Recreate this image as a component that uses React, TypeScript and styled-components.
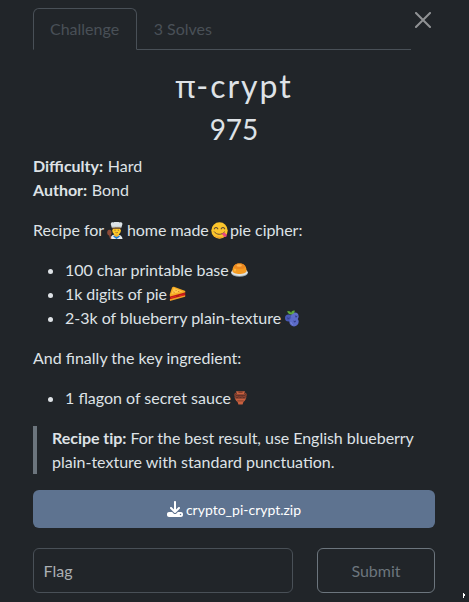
import React from "react";
import styled, { createGlobalStyle } from "styled-components";
import { FaDownload } from "react-icons/fa6";

const GlobalStyle = createGlobalStyle`
  *, *::before, *::after { box-sizing: border-box; }
  html, body { margin: 0; background: #212529; }
  body {
    font-family: Lato, "Liberation Sans", sans-serif;
    font-size: 16px;
    line-height: 24px;
    color: #dee2e6;
    overflow: hidden;
  }
`;

const Modal = styled.main`
  position: relative;
  width: 469px;
  height: 602px;
  padding: 8px 34px 0 33px;
  background: #212529;
  overflow: hidden;
`;

const Header = styled.header`
  display: flex;
  justify-content: space-between;
  align-items: flex-start;
  margin-right: -1px;
`;

const Tabs = styled.nav`
  display: flex;
  width: 378px;
  height: 42px;
  border-bottom: 1px solid #495057;
`;

const Tab = styled.button<{ $active?: boolean }>`
  height: 42px;
  padding: ${(p) => (p.$active ? "8px 17px 8px 16px" : "8px 15.5px")};
  border: 1px solid ${(p) => (p.$active ? "#495057" : "transparent")};
  border-bottom-color: ${(p) => (p.$active ? "#212529" : "transparent")};
  border-radius: 6px 6px 0 0;
  background: ${(p) => (p.$active ? "#212529" : "transparent")};
  color: #495057;
  font: inherit;
`;

const Close = styled.button`
  display: flex;
  margin: 4px 5px 0 0;
  padding: 0;
  border: 0;
  background: none;
  color: #909294;
`;

const Title = styled.h2`
  margin: 17px 0 0;
  font-size: 32px;
  font-weight: 400;
  line-height: 38px;
  letter-spacing: 2px;
  text-align: center;
`;

const Greek = styled.span`
  font-family: "Noto Sans", sans-serif;
  font-size: 31px;
  line-height: 1;
  letter-spacing: 0.8px;
`;

const Points = styled.h3`
  margin: 8px 0 0;
  font-size: 28px;
  font-weight: 400;
  line-height: 33px;
  text-align: center;
`;

const Text = styled.p`
  margin: 0 0 16px;
  white-space: nowrap;
`;

const Facts = styled(Text)`
  margin-top: 8px;
`;

const Strong = styled.strong`
  margin-right: 0.5px;
`;

const List = styled.ul`
  margin: 0 0 16px;
  padding-left: 32px;
`;

const Tip = styled.blockquote`
  margin: 0 0 16px;
  padding-left: 15px;
  border-left: 4px solid #6c757d;
`;

const TipLead = styled.span`
  letter-spacing: -0.04px;
`;

const Emoji = styled.svg<{ $before?: number; $after?: number }>`
  width: 17px;
  height: 17px;
  vertical-align: -3px;
  margin-left: ${(p) => p.$before ?? -1.5}px;
  margin-right: ${(p) => p.$after ?? 0}px;
`;

const Snug = styled.span`
  letter-spacing: -0.05px;
`;

const Download = styled.button`
  display: flex;
  align-items: center;
  justify-content: center;
  gap: 3px;
  width: 402px;
  height: 38px;
  border: 0;
  border-radius: 6px;
  background: #5e7390;
  color: #fff;
  font: 14px/21px Lato, sans-serif;
`;

const Form = styled.form`
  display: grid;
  grid-template-columns: 260px 118px;
  gap: 24px;
  margin-top: 20px;
`;

const Field = styled.input`
  width: 100%;
  height: 45px;
  padding: 0 9.5px;
  border: 1px solid #495057;
  border-radius: 6px;
  background: #212529;
  color: #dee2e6;
  font: inherit;
  &::placeholder { color: #abafb3; opacity: 1; }
`;

const Submit = styled.button`
  height: 45px;
  border: 1px solid #6c757d;
  border-radius: 6px;
  background: transparent;
  color: #6c757d;
  font: inherit;
`;

const CornerMark = styled.svg`
  position: absolute;
  left: 463px;
  top: 593px;
`;

const Cook = () => (
  <Emoji viewBox="0 0 17 17" $before={-1} $after={3}>
    <path d="M3.5 17c.2-3.3 2-4.6 5.7-4.6s6 1.2 6.3 4.6z" fill="#e6edf0" />
    <path d="M7 11h5v2.5l-2.5 2L7 13.5z" fill="#eaad2d" />
    <path d="M6.4 13.4 9.5 15l3.2-1.6v1.3L9.5 17l-3.1-2.3z" fill="#1976d2" />
    <circle cx="9.6" cy="8.4" r="4.3" fill="#ffca28" />
    <path d="M5.2 8.3V5.2h8.8v3.1l-1-1.6H6.3z" fill="#543930" />
    <path d="M4.8 5.7 3.8 2.3C3.7.6 5.2 0 6.3.5c1.3-1 5.1-1 6.4 0 1.3-.5 3 .3 2.7 1.8l-1.1 3.4c-2.3-.7-7.1-.7-9.5 0z" fill="#dce3e7" />
    <path d="M5.1 4.8c2.5-.6 6.5-.6 9 0" stroke="#b5c2c8" strokeWidth=".5" fill="none" />
    <path d="M7.5 8.2h1M10.8 8.2h1" stroke="#5b4637" strokeWidth=".8" />
    <path d="M8.4 10.4q1.3.8 2.5 0" stroke="#795548" strokeWidth=".7" fill="none" />
    <ellipse cx="2.4" cy="10.6" rx="2.2" ry="2.9" fill="#8d4b38" />
    <path d="m2.5 12 1.3 5" stroke="#8d4b38" strokeWidth="1.3" />
  </Emoji>
);

const Yummy = () => (
  <Emoji viewBox="0 0 17 17" $before={-2} $after={-2}>
    <circle cx="8.5" cy="8.5" r="8.2" fill="#fcc52b" />
    <path d="M2 12.8c3 4.3 9.5 4.7 13 .1-2 2-10 2.7-13-.1z" fill="#efa02b" />
    <path d="M3.3 6.8q1.7-2.5 3.5 0M10.2 6.8q1.8-2.5 3.5 0" stroke="#5b4637" strokeWidth="1.1" fill="none" strokeLinecap="round" />
    <path d="M3.3 9.8c2.4 3.3 7.3 3.5 10.2.2" stroke="#654936" strokeWidth="1" fill="none" strokeLinecap="round" />
    <path d="m10.6 11.8 3-1.4 1.8 2c1.2 1.7-.8 3.3-2.4 2z" fill="#e6487e" />
  </Emoji>
);

const Custard = () => (
  <Emoji viewBox="0 0 17 17">
    <ellipse cx="8.5" cy="10.9" rx="8.3" ry="3.9" fill="#9ba8ae" />
    <ellipse cx="8.5" cy="10.2" rx="8.2" ry="3.7" fill="#dce3e5" />
    <path d="M1.4 8.9C1.4 6.5 2.4 4 4 2.8c2-1.7 7-1.7 9 0 1.6 1.2 2.6 3.7 2.6 6.1-.5 4-13.7 4-14.2 0z" fill="#f59b22" />
    <path d="M4 2.8c2-1.7 7-1.7 9 0l1.4 2.1c-1.2 1.8-2.9 2.1-5.9 2.1S3.8 6.7 2.6 4.9z" fill="#ed8920" />
    <ellipse cx="8.2" cy="3.5" rx="2.7" ry="1.2" fill="#ffb34c" />
    <path d="M4 7.3v1.7" stroke="#ffc346" strokeWidth="1.2" strokeLinecap="round" />
  </Emoji>
);

const Pie = () => (
  <Emoji viewBox="0 0 17 17" $before={-2.5}>
    <path d="M.8 9 16.3 6.2v4L1 14.2z" fill="#b91818" />
    <path d="M.7 8.8 3 1.8c.5-1.2 1.5-1.3 2.6-.9L15.8 4.7c.8.5.8 1.5-.1 1.9L1.1 10.4z" fill="#f5a923" />
    <path d="M2.4 8.1 4.8 2.1 13.8 5.6z" fill="#ffca4b" />
    <path d="m4.5 6 1 .4m1-2.5.8.8m2 .8h.9" stroke="#c85a1c" strokeWidth=".9" />
    <path d="m.8 13.2 15.3-3.9v1.5L1 14.9z" fill="#ed9c27" />
    <path d="m2 11.7 5-1.2m3-.6 4.5-1" stroke="#e52a21" strokeWidth="1" />
  </Emoji>
);

const Blueberries = () => (
  <Emoji viewBox="0 0 17 17" $before={-1}>
    <circle cx="4.6" cy="8" r="3.6" fill="#4858b2" />
    <circle cx="10.8" cy="6.2" r="3.8" fill="#5f6fc8" />
    <circle cx="10" cy="11.8" r="4.7" fill="#5c6bc8" />
    <path d="M7 4.4C4.8 4.6 3.4 3 3.3 1.1c2.2-.2 3.5.5 3.8 2.1C7.3 1 8.8.1 10.8.5c0 2-1.1 3.8-3.8 3.9z" fill="#60a83b" />
    <path d="m2.8 7 1.5 1 1.6-.7-.7 1.7-1.5.6zM10.8 5l1.2 1 1.5-.5-.5 1.7-1.5.2zM9.4 10.4l1.3.7 1.4-.6-.4 1.6-1.6.4z" fill="#35408a" />
    <path d="M6.8 12c.3 1.5 1.2 2.5 2.2 2.7" stroke="#7886dc" strokeWidth="1" fill="none" />
  </Emoji>
);

const Amphora = () => (
  <Emoji viewBox="0 0 17 17" $before={-2.5}>
    <path d="M4.3 3.2Q2.4 3.5 3 6M12.7 3.2Q14.6 3.5 14 6" stroke="#8e412c" strokeWidth="1.3" fill="none" />
    <path d="M4 1.3h9l-.8 2.4c3.2 2 2.6 5.6-.8 8.2L10.6 14.6H6.4L5.6 11.9C2.2 9.3 1.6 5.7 4.8 3.7z" fill="#c8603f" />
    <path d="M3.4 4.5h10.2l.2 4H3.2z" fill="#613128" />
    <path d="m3.8 7.5 1.5-1.6 1.6 1.6 1.6-1.6 1.6 1.6 1.6-1.6 1.5 1.6" stroke="#ad5039" strokeWidth=".7" fill="none" />
    <path d="M6.4 1.5h4.2v1.3H6.4z" fill="#773827" />
    <path d="M5.3 10.9h6.4" stroke="#773827" strokeWidth=".8" />
  </Emoji>
);

export default function App() {
  return (
    <>
      <GlobalStyle />
      <Modal>
        <Header>
          <Tabs>
            <Tab $active>Challenge</Tab>
            <Tab>3 Solves</Tab>
          </Tabs>
          <Close aria-label="Close">
            <svg width="16" height="16" viewBox="0 0 16 16">
              <path d="m1 1 14 14M15 1 1 15" stroke="currentColor" strokeWidth="2" strokeLinecap="square" />
            </svg>
          </Close>
        </Header>
        <Title><Greek>π</Greek>-crypt</Title>
        <Points>975</Points>
        <Facts>
          <Strong>Difficulty:</Strong> Hard
          <br />
          <Strong>Author:</Strong> Bond
        </Facts>
        <Text>
          Recipe for <Cook /><Snug>home made </Snug><Yummy /> <Snug>pie cipher:</Snug>
        </Text>
        <List>
          <li><Snug>100 char printable base </Snug><Custard /></li>
          <li><Snug>1k digits of pie </Snug><Pie /></li>
          <li>2-3k of blueberry plain-texture <Blueberries /></li>
        </List>
        <Text>And finally the key ingredient:</Text>
        <List>
          <li>1 flagon of secret sauce <Amphora /></li>
        </List>
        <Tip>
          <TipLead>
            <strong>Recipe tip:</strong> For the best result, use English blueberry
          </TipLead>{" "}
          plain-texture with standard punctuation.
        </Tip>
        <Download>
          <FaDownload size={16} />
          crypto_pi-crypt.zip
        </Download>
        <Form>
          <Field placeholder="Flag" />
          <Submit type="button">Submit</Submit>
        </Form>
        <CornerMark width="2" height="5" viewBox="0 0 2 5">
          <path d="M0 0h1v5H0zM1 1h1v2H1z" fill="#fff" />
        </CornerMark>
      </Modal>
    </>
  );
}
